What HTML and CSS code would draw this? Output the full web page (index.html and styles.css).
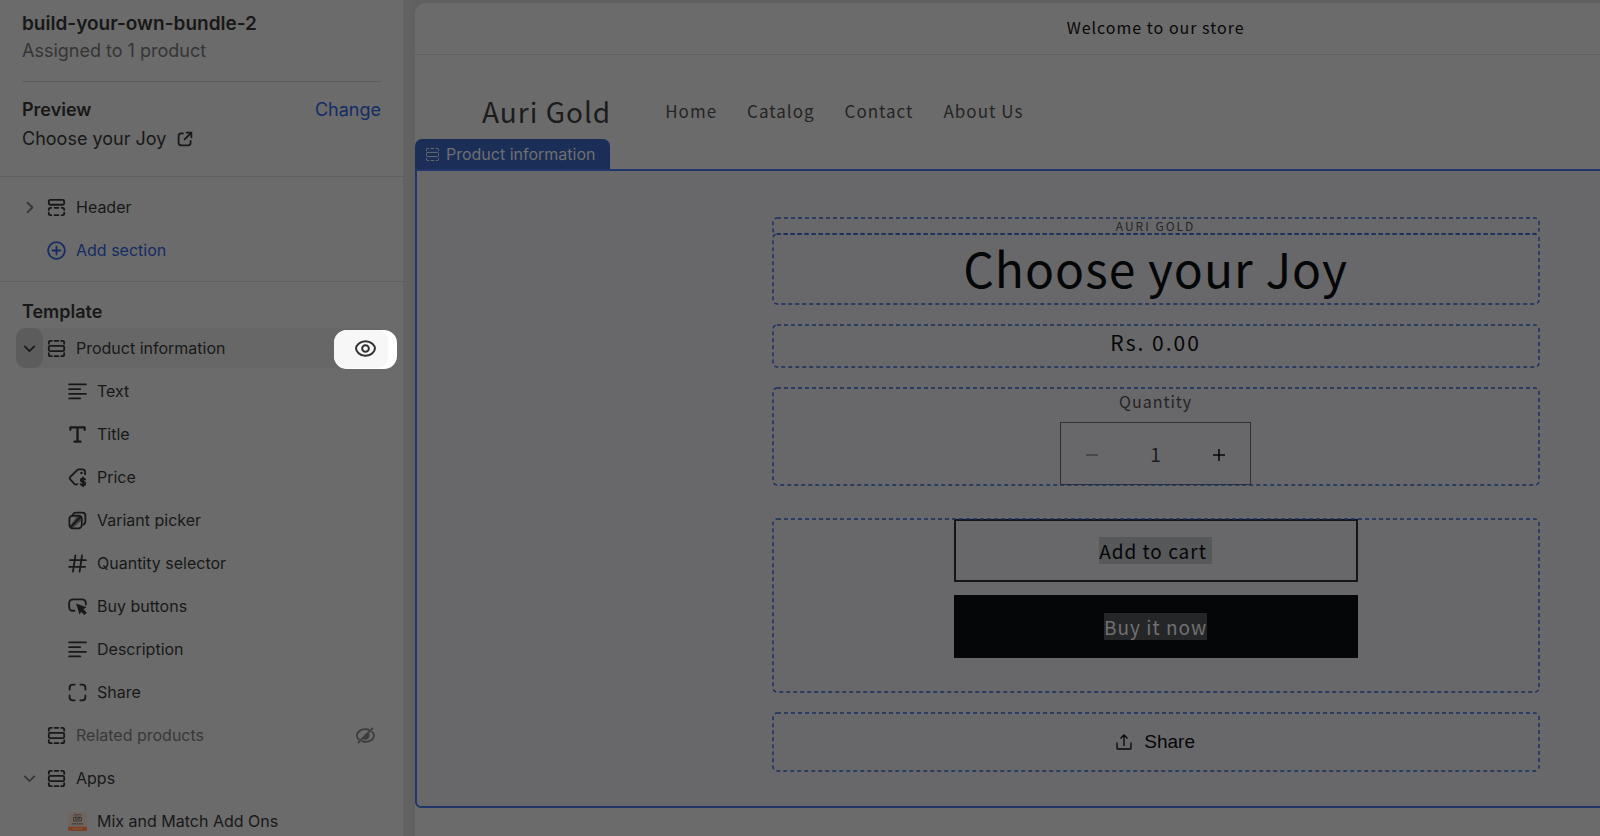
FILE: index.html
```html
<!DOCTYPE html>
<html lang="en">
<head>
<meta charset="utf-8">
<title>build-your-own-bundle-2</title>
<link rel="stylesheet" href="styles.css">
</head>
<body>
<svg class="sprite" aria-hidden="true">
  <symbol id="i-section" viewBox="0 0 20 20"><path d="M1.9 5V3.700Q1.900 1.900 3.700 1.900H5M8 1.900H12M15 1.900H16.300Q18.100 1.900 18.100 3.700V5M1.900 15V16.300Q1.900 18.100 3.700 18.100H5M8 18.100H12M15 18.100H16.300Q18.100 18.100 18.100 16.300V15"/><rect x="1.900" y="7.200" width="16.200" height="5.600" rx="1.600"/></symbol>
  <symbol id="i-header" viewBox="0 0 20 20"><rect x="1.900" y="1.900" width="16.200" height="5.200" rx="1.600"/><path d="M1.900 12.500V12Q1.900 10.300 3.600 10.300H4.500M8 10.300H12M15.500 10.300H16.400Q18.100 10.300 18.100 12V12.500M1.900 15.500V16.400Q1.900 18.100 3.600 18.100H4.500M8 18.100H12M15.500 18.100H16.400Q18.100 18.100 18.100 16.400V15.500"/></symbol>
  <symbol id="i-right" viewBox="0 0 20 20"><path d="M8 5l5 5-5 5"/></symbol>
  <symbol id="i-down" viewBox="0 0 20 20"><path d="M5 7.800l5 5 5-5"/></symbol>
  <symbol id="i-plus" viewBox="0 0 20 20"><circle cx="10" cy="10" r="8.800"/><path d="M10 5.800v8.400M5.800 10h8.400"/></symbol>
  <symbol id="i-lines" viewBox="0 0 20 20"><path d="M1.200 2.500H18.800M1.200 7.500H12.800M1.200 12.500H18.800M1.200 17.300H12.800"/></symbol>
  <symbol id="i-title" viewBox="0 0 20 20"><path d="M2.500 5V2.500H17.500V5M10 2.500V17.500M6.800 17.500H13.200"/></symbol>
  <symbol id="i-price" viewBox="0 0 20 20"><path d="M18 6.500V4.200Q18 1.500 15.300 1.500H11.500Q10.300 1.500 9.400 2.400L2.400 9.400Q1.100 10.700 2.400 12L6.800 16.800Q8.300 18.200 9.800 17"/><circle class="dot" cx="14.200" cy="5.300" r="1.300"/><path d="M18 12.200Q17.500 11 15.800 11 13.500 11 13.500 12.800 13.500 14.200 15.800 14.500 18.200 14.800 18.200 16.300 18.200 18.200 15.800 18.200 13.800 18.200 13.300 16.900M15.800 9.800V19.400"/></symbol>
  <symbol id="i-variant" viewBox="0 0 20 20"><rect x="1.500" y="5" width="13" height="13.300" rx="3.500"/><path d="M5.200 3.600Q6.200 1.700 8.600 1.700H15Q18.300 1.700 18.300 5V10.500Q18.300 13.300 16.500 14.300M3 16.500L13.500 6M7.500 12L12.500 7"/><path class="dot" d="M9 6h4.500v4.500L5 18 2.500 15.500z" opacity=".55"/></symbol>
  <symbol id="i-hash" viewBox="0 0 20 20"><path d="M7.800 1.500L5.200 18.500M14.800 1.500L12.200 18.500M2 6.500H18.800M1.200 13.500H18"/></symbol>
  <symbol id="i-buy" viewBox="0 0 20 20"><path d="M6.800 14.500H5.500Q1.200 14.500 1.200 10.200V6.800Q1.200 2.500 5.500 2.500H14.500Q18.800 2.500 18.800 6.800V8"/><path class="dot" d="M8.500 6.800L19.500 10.800 16.200 13 19.800 16.600 17.300 19 13.900 15.600 12.200 18.800z"/></symbol>
  <symbol id="i-block" viewBox="0 0 20 20"><path d="M1.700 7V5Q1.700 1.700 5 1.700H7M13 1.700H15Q18.300 1.700 18.300 5V7M18.300 13V15Q18.300 18.300 15 18.300H13M7 18.300H5Q1.700 18.300 1.700 15V13"/></symbol>
  <symbol id="i-eye" viewBox="0 0 20 20"><path d="M1 10C1 7.500 4.500 3 10 3S19 7.500 19 10 15.500 17 10 17 1 12.500 1 10z"/><circle cx="10" cy="10" r="3.200"/></symbol>
  <symbol id="i-eyeoff" viewBox="0 0 20 20"><path d="M3 14.200C1.500 12.800 1 11.300 1 10 1 6.500 5 3.300 10 3.300 11.500 3.300 12.500 3.500 13.500 3.900M17 6.200C18.400 7.500 19 8.800 19 10 19 13.500 15 16.700 10 16.700 9 16.700 8 16.500 7 16.200M2.500 17.500L17.300 2.500M8.500 13.200Q11 14 12.500 12.300 13.600 11 13.200 8.500z"/></symbol>
  <symbol id="i-external" viewBox="0 0 20 20"><path d="M7.500 3H5.300Q2 3 2 6.300V14.700Q2 18 5.300 18H13.700Q17 18 17 14.700V12.500M12 2H18V8M18 2L9.500 10.500"/></symbol>
</svg>
<div class="editor">
  <aside class="sidebar">
    <header class="info">
      <h1 class="name">build-your-own-bundle-2</h1>
      <p class="assigned">Assigned to 1 product</p>
      <div class="preview">
        <div class="preview-head"><h2 class="heading">Preview</h2><button class="change" type="button">Change</button></div>
        <a class="preview-link" href="#product">Choose your Joy <svg class="icon external"><use href="#i-external"/></svg></a>
      </div>
    </header>
    <section class="group">
      <div class="row"><button class="toggle" type="button" aria-label="Expand Header"><svg class="icon"><use href="#i-right"/></svg></button><a class="item" href="#header"><svg class="icon"><use href="#i-header"/></svg>Header</a></div>
      <div class="row"><button class="item add" type="button"><svg class="icon"><use href="#i-plus"/></svg>Add section</button></div>
    </section>
    <section class="group template">
      <h2 class="heading">Template</h2>
      <div class="row selected"><button class="toggle" type="button" aria-label="Collapse Product information"><svg class="icon"><use href="#i-down"/></svg></button><a class="item" href="#product"><svg class="icon"><use href="#i-section"/></svg>Product information</a><button class="visibility" type="button" aria-label="Hide section"><svg class="icon eye"><use href="#i-eye"/></svg></button></div>
      <div class="row child"><a class="item" href="#text"><svg class="icon"><use href="#i-lines"/></svg>Text</a></div>
      <div class="row child"><a class="item" href="#title"><svg class="icon heavy"><use href="#i-title"/></svg>Title</a></div>
      <div class="row child"><a class="item" href="#price"><svg class="icon"><use href="#i-price"/></svg>Price</a></div>
      <div class="row child"><a class="item" href="#variant"><svg class="icon"><use href="#i-variant"/></svg>Variant picker</a></div>
      <div class="row child"><a class="item" href="#quantity"><svg class="icon"><use href="#i-hash"/></svg>Quantity selector</a></div>
      <div class="row child"><a class="item" href="#buy"><svg class="icon"><use href="#i-buy"/></svg>Buy buttons</a></div>
      <div class="row child"><a class="item" href="#description"><svg class="icon"><use href="#i-lines"/></svg>Description</a></div>
      <div class="row child"><a class="item" href="#share"><svg class="icon"><use href="#i-block"/></svg>Share</a></div>
      <div class="row muted"><a class="item" href="#related"><svg class="icon"><use href="#i-section"/></svg>Related products</a><button class="hidden-toggle" type="button" aria-label="Show section"><svg class="icon"><use href="#i-eyeoff"/></svg></button></div>
      <div class="row"><button class="toggle" type="button" aria-label="Collapse Apps"><svg class="icon"><use href="#i-down"/></svg></button><a class="item" href="#apps"><svg class="icon"><use href="#i-section"/></svg>Apps</a></div>
      <div class="row child"><a class="item" href="#mix"><svg class="app-icon" viewBox="0 0 20 20"><rect width="20" height="20" rx="2" fill="#70645e"/><path d="M0 15.500H20V18Q20 20 18 20H2Q0 20 0 18z" fill="#7a4023"/><path d="M6 3.500q2-2 4 0 2-2 4 0M6 5.500h8v4H6zM8 5.500v2h4v-2" fill="none" stroke="#383432"/><path d="M4 12.500h12" stroke="#3d3835" stroke-width="1.500" stroke-dasharray="2 .5"/><path d="M5 17.700h10" stroke="#8a5a42" stroke-width="1.200" stroke-dasharray="2 .5"/></svg>Mix and Match Add Ons</a></div>
    </section>
  </aside>
  <main class="stage">
    <div class="store">
      <div class="announcement">Welcome to our store</div>
      <header class="store-header">
        <a class="logo" href="#home">Auri Gold</a>
        <nav class="nav"><a href="#home">Home</a><a href="#catalog">Catalog</a><a href="#contact">Contact</a><a href="#about">About Us</a></nav>
        <div class="tab"><svg class="icon tab-icon"><use href="#i-section"/></svg>Product information</div>
      </header>
      <section class="product" id="product">
        <div class="block vendor"><svg class="outline"><rect width="100%" height="100%" rx="4"/></svg>AURI GOLD</div>
        <div class="block title"><svg class="outline"><rect width="100%" height="100%" rx="4"/></svg><h2 class="product-title">Choose your Joy</h2></div>
        <div class="block price"><svg class="outline"><rect width="100%" height="100%" rx="4"/></svg>Rs. 0.00</div>
        <div class="block quantity"><label for="qty">Quantity</label>
          <div class="stepper"><button class="minus" type="button" aria-label="Decrease quantity"><svg viewBox="0 0 12 12"><path d="M0 6H12"/></svg></button><input id="qty" type="text" value="1"><button type="button" aria-label="Increase quantity"><svg viewBox="0 0 12 12"><path d="M0 6H12M6 0V12"/></svg></button></div><svg class="outline"><rect width="100%" height="100%" rx="4"/></svg></div>
        <div class="block buy"><button class="cta" type="button"><span class="mark">Add to cart&nbsp;</span></button><button class="cta dark" type="button"><span class="mark">Buy it now</span></button><svg class="outline"><rect width="100%" height="100%" rx="4"/></svg></div>
        <div class="block share"><svg class="outline"><rect width="100%" height="100%" rx="4"/></svg><button class="share-button" type="button"><svg class="share-icon" viewBox="0 0 16 16"><path d="M1 8.500V14.200Q1 15 1.800 15H14.200Q15 15 15 14.200V8.500M8 12V1M4.500 4.500L8 1l3.500 3.500"/></svg>Share</button></div>
      </section>
    </div>
  </main>
</div>
</body>
</html>
```
FILE: styles.css
```css
* { box-sizing: border-box; }
body { margin: 0; background: #646464; color: #181818; font: 16px/24px Inter, "Liberation Sans", sans-serif; }
h1, h2, p { margin: 0; }
a { color: inherit; text-decoration: none; }
button { padding: 0; border: 0; background: none; color: inherit; font: inherit; }
.sprite { position: absolute; width: 0; height: 0; }
.icon { width: 19px; height: 19px; flex: none; fill: none; stroke: currentColor; stroke-width: 1.9; stroke-linecap: round; stroke-linejoin: round; }
.icon.heavy { stroke-width: 2.4; }
.dot { fill: currentColor; stroke: none; }
.editor { display: flex; height: 100vh; overflow: hidden; }

.sidebar { flex: none; width: 403px; background: #6b6b6b; }
.info { padding: 10px 22px 23px; }
.name { font-size: 19px; line-height: 28px; font-weight: 600; }
.assigned { font-size: 18px; line-height: 26px; color: #353535; }
.preview { margin-top: 17px; padding-top: 14px; border-top: 1px solid #5c5c5c; }
.preview-head { display: flex; justify-content: space-between; line-height: 28px; font-size: 18px; }
.heading { font-size: 18px; line-height: 28px; font-weight: 600; }
.change { color: #142c64; }
.preview-link { display: flex; align-items: center; gap: 11px; font-size: 18px; line-height: 28px; margin-top: 1px; }
.external { width: 16px; height: 16px; stroke-width: 2.2; }
.group { display: flex; flex-direction: column; gap: 3px; padding: 10px 15px 11px 16px; border-top: 1px solid #5f5f5f; }
.template { padding-top: 16px; }
.template .heading { margin: 0 6px; line-height: 27px; }
.row { position: relative; display: flex; align-items: center; height: 40px; padding-left: 31px; border-radius: 10px; }
.row.child { padding-left: 52px; }
.row:has(.toggle) { padding-left: 0; }
.toggle { display: grid; place-items: center; width: 27px; height: 40px; margin-right: 4px; border-radius: 10px; color: #373737; }
.item { display: flex; align-items: center; gap: 10px; }
.add { color: #142c64; }
.selected { background: #676767; }
.selected .toggle { background: #5c5c5c; color: #1b1b1b; }
.muted .item { color: #383838; }
.muted .item .icon { color: #181818; }
.hidden-toggle { display: flex; margin: 0 13px 0 auto; color: #3c3c3c; }
.visibility { position: absolute; right: -9px; top: 2px; width: 63px; height: 39px; border-radius: 13px; overflow: hidden; background: #fff; color: #303030; }
.visibility::before { content: ""; position: absolute; inset: 0 9px 1px 0; border-radius: 0 10px 10px 0; background: #f7f7f7; }
.eye { position: relative; display: block; margin: 0 auto 3px; width: 21px; height: 21px; }
.app-icon { width: 19px; height: 19px; }

.stage { flex: 1; min-width: 0; padding: 3px 0 0 12px; overflow: hidden; background: linear-gradient(90deg, #636363, #606060 12px); }
.store { width: 125%; height: 100%; border-radius: 10px 0 0 0; background: #6b6b6b; font-family: "Noto Sans CJK SC", sans-serif; }
.announcement { height: 52px; padding-top: 12px; border-bottom: 1px solid #606060; text-align: center; font-size: 16px; line-height: 24px; letter-spacing: 1px; color: #080808; }
.store-header { position: relative; display: flex; align-items: center; gap: 54px; height: 114px; padding: 0 0 2px 67px; }
.logo { font-size: 28px; line-height: 36px; letter-spacing: 1px; color: #1c1c1c; }
.nav { display: flex; gap: 30px; font-size: 17px; line-height: 24px; letter-spacing: 1px; color: #242424; }
.tab { position: absolute; left: 0; bottom: 0; display: flex; align-items: center; gap: 6px; height: 30px; padding: 0 14px 0 10px; border-radius: 7px 7px 0 0; background: #1a2e58; color: #707070; font: 16px/24px Inter, sans-serif; }
.tab-icon { width: 15px; height: 15px; stroke-width: 1.2; }
.product { padding: 47px 0 35px; border: 2px solid #20356a; border-radius: 0 0 0 6px; background: #68686a; color: #050607; letter-spacing: 1px; }
.block { position: relative; width: 766px; max-width: 90%; margin: 0 auto 21px; text-align: center; }
.outline { position: absolute; inset: 0; width: 100%; height: 100%; overflow: visible; fill: none; stroke: #192e5e; stroke-width: 1.400; stroke-dasharray: 4 3; pointer-events: none; }
.vendor { margin-bottom: 0; font-size: 12px; line-height: 16px; letter-spacing: 2px; color: #242425; }
.title { padding-bottom: 3px; }
.product-title { font-size: 48px; line-height: 67px; font-weight: 400; }
.price { padding: 2px 0 10px; font-size: 21px; line-height: 30px; letter-spacing: 2px; }
.quantity { margin-bottom: 34px; padding-top: 1px; font-size: 16px; line-height: 24px; color: #242425; }
.quantity label { display: block; }
.stepper { display: flex; width: 191px; height: 63px; margin: 9px auto 0; border: 1px solid #303032; }
.stepper button { width: 62px; color: #050607; }
.stepper svg { width: 12px; height: 12px; fill: none; stroke: currentColor; stroke-width: 1.500; }
.stepper .minus { color: #404042; }
.stepper input { flex: 1; min-width: 0; padding: 0; border: 0; background: none; text-align: center; font: 19px/28px "Noto Sans CJK SC", sans-serif; color: #1c1c1e; }
.buy { display: grid; justify-content: center; gap: 13px; padding-bottom: 34px; grid-template-columns: 404px; }
.cta { display: grid; place-items: center; height: 63px; border: 2px solid #151618; font-size: 19px; line-height: 27px; letter-spacing: 1px; }
.mark { display: block; height: 27px; background: #57585a; }
.cta.dark { background: #050607; border-color: #050607; color: #707072; }
.dark .mark { background: #252628; }
.share { padding: 15px 0; margin-bottom: 0; }
.share-button { display: inline-flex; align-items: center; gap: 12px; font: 19px/28px "Liberation Sans", sans-serif; letter-spacing: 0; vertical-align: top; }
.share-icon { width: 16px; height: 16px; fill: none; stroke: currentColor; stroke-width: 1.300; }
```
